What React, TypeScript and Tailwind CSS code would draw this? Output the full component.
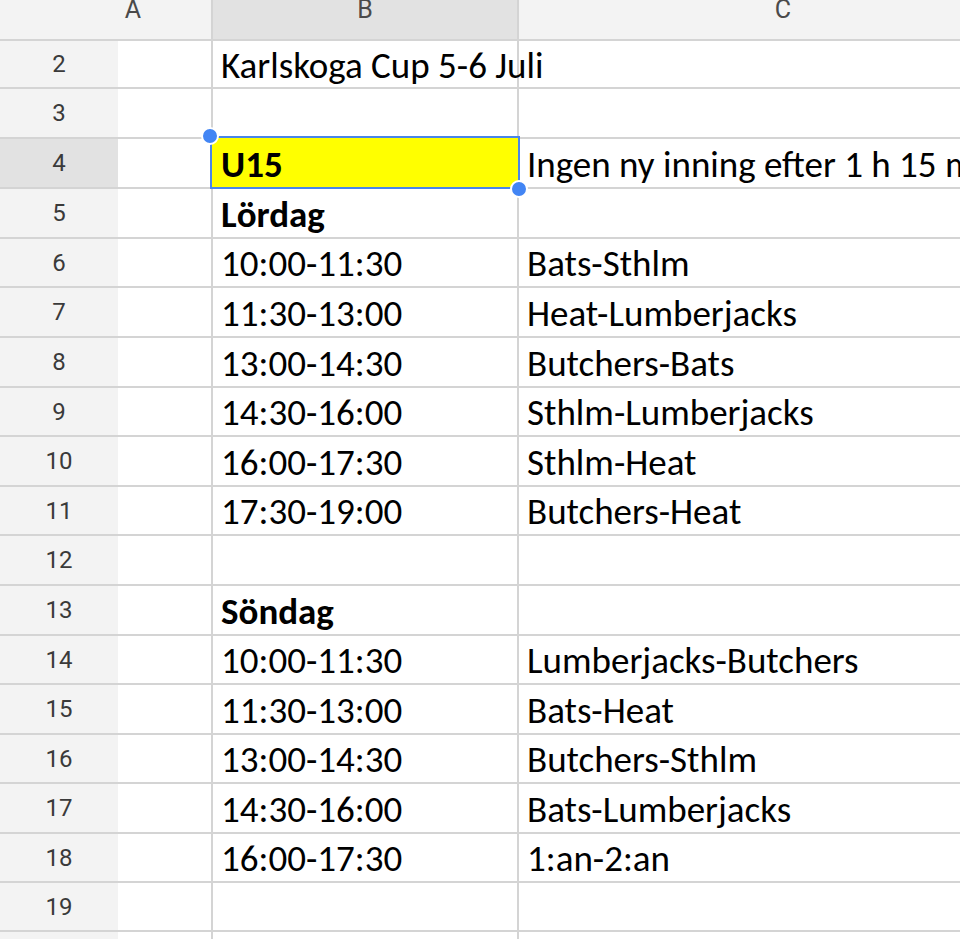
const CELL_FONT = { fontFamily: "Carlito, 'Open Sans', sans-serif" };

type Row = {
  n: number;
  h: number;
  b?: string;
  c?: string;
  bold?: boolean;
  selected?: boolean;
};

const ROWS: Row[] = [
  { n: 2, h: 48, b: "Karlskoga Cup 5-6 Juli" },
  { n: 3, h: 50 },
  { n: 4, h: 50, b: "U15", c: "Ingen ny inning efter 1 h 15 min", bold: true, selected: true },
  { n: 5, h: 50, b: "Lördag", bold: true },
  { n: 6, h: 49, b: "10:00-11:30", c: "Bats-Sthlm" },
  { n: 7, h: 50, b: "11:30-13:00", c: "Heat-Lumberjacks" },
  { n: 8, h: 50, b: "13:00-14:30", c: "Butchers-Bats" },
  { n: 9, h: 49, b: "14:30-16:00", c: "Sthlm-Lumberjacks" },
  { n: 10, h: 50, b: "16:00-17:30", c: "Sthlm-Heat" },
  { n: 11, h: 49, b: "17:30-19:00", c: "Butchers-Heat" },
  { n: 12, h: 50 },
  { n: 13, h: 50, b: "Söndag", bold: true },
  { n: 14, h: 49, b: "10:00-11:30", c: "Lumberjacks-Butchers" },
  { n: 15, h: 50, b: "11:30-13:00", c: "Bats-Heat" },
  { n: 16, h: 49, b: "13:00-14:30", c: "Butchers-Sthlm" },
  { n: 17, h: 50, b: "14:30-16:00", c: "Bats-Lumberjacks" },
  { n: 18, h: 49, b: "16:00-17:30", c: "1:an-2:an" },
  { n: 19, h: 49 },
  { n: 20, h: 49 },
];

function Handle({ className }: { className: string }) {
  return (
    <span
      className={`absolute z-20 h-[18px] w-[18px] rounded-full border-2 border-white bg-[#4285f4] ${className}`}
    />
  );
}

export default function App() {
  return (
    <div className="h-[939px] w-[960px] overflow-hidden bg-white text-black">
      <div className="w-[1047px]">
        {/* column header, scrolled so the letters sit at the very top */}
        <div className="flex h-[41px] overflow-hidden border-b-2 border-[#d4d4d4] bg-[#f3f3f3] font-['Roboto',sans-serif] text-[25px] leading-none text-[#4a4a4a]">
          <div className="w-[213px] shrink-0 border-r-2 border-[#d4d4d4] pl-[55px]">
            <div className="-mt-[3px] flex justify-center">A</div>
          </div>
          <div className="w-[306px] shrink-0 border-r-2 border-[#d4d4d4] bg-[#e2e2e2]">
            <div className="-mt-[3px] flex justify-center">B</div>
          </div>
          <div className="flex-1">
            <div className="-mt-[3px] flex justify-center">C</div>
          </div>
        </div>

        {ROWS.map((r) => (
          <div
            key={r.n}
            className="flex border-b-2 border-[#d4d4d4]"
            style={{ height: r.h }}
          >
            <div
              className={`flex w-[118px] shrink-0 items-center justify-center font-['Roboto',sans-serif] text-[24px] text-[#3a3a3a] ${
                r.selected ? "bg-[#e2e2e2]" : "bg-[#f3f3f3]"
              }`}
            >
              {r.n}
            </div>
            <div className="w-[95px] shrink-0 border-r-2 border-[#d4d4d4]" />
            <div className="relative w-[306px] shrink-0 border-r-2 border-[#d4d4d4]">
              {r.selected && (
                <>
                  <div className="absolute -left-[3px] -top-[3px] z-10 h-[53px] w-[310px] border-2 border-[#4a86e8] bg-[#ffff00]" />
                  <Handle className="-left-[12px] -top-[12px]" />
                  <Handle className="-bottom-[11px] -right-[11px]" />
                </>
              )}
              {r.b && (
                <div
                  className={`relative z-10 flex h-full items-center whitespace-nowrap pl-[8px] pt-[2px] text-[37px] leading-none ${
                    r.bold ? "font-bold" : ""
                  }`}
                  style={CELL_FONT}
                >
                  {r.b}
                </div>
              )}
            </div>
            <div className="flex-1">
              {r.c && (
                <div
                  className="flex h-full items-center whitespace-nowrap pl-[8px] pt-[2px] text-[37px] leading-none"
                  style={CELL_FONT}
                >
                  {r.c}
                </div>
              )}
            </div>
          </div>
        ))}
      </div>
    </div>
  );
}
